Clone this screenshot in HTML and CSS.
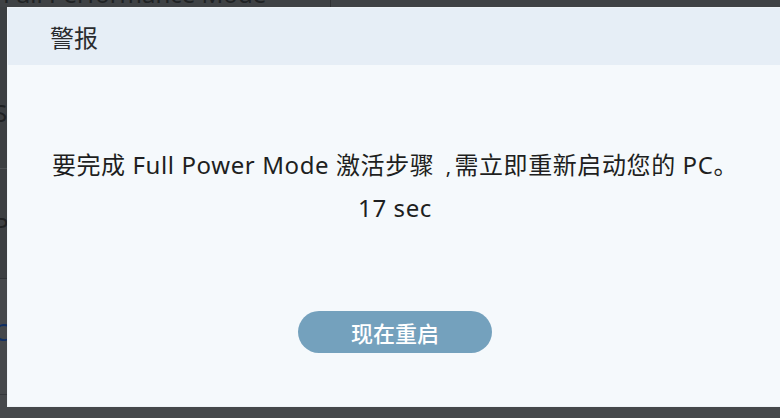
FILE: index.html
```html
<!DOCTYPE html>
<html lang="zh-CN">
<head>
<meta charset="utf-8">
<title>警报</title>
<link rel="stylesheet" href="styles.css">
</head>
<body>
<div class="app">
  <div class="app-top">
    <div class="app-title">Full Performance Mode</div>
    <div class="app-divider"></div>
  </div>
  <div class="app-list">
    <div class="app-row row-a"><span class="row-text">Settings</span></div>
    <div class="app-row row-b"><span class="row-text">Power</span></div>
    <div class="app-row row-c"><span class="row-text link">Cancel</span></div>
  </div>
</div>

<div class="dialog" role="alertdialog">
  <div class="dialog-header">警报</div>
  <div class="dialog-body">
    <p class="message">要完成 Full Power Mode 激活步骤<span class="comma">,</span>需立即重新启动您的 PC。<br>17 sec</p>
    <button class="restart-btn">现在重启</button>
  </div>
</div>
</body>
</html>
```
FILE: styles.css
```css
html, body {
  margin: 0;
  padding: 0;
}
body {
  width: 780px;
  height: 418px;
  overflow: hidden;
  position: relative;
  background: #45484b;
  font-family: "Noto Sans", "Noto Sans CJK SC", sans-serif;
}

/* dimmed application behind the dialog */
.app {
  display: flex;
  flex-direction: column;
  height: 418px;
}
.app-top {
  display: flex;
  height: 7px;
  overflow: hidden;
  background: #3f4245;
}
.app-title {
  width: 327px;
  padding-left: 3px;
  font-size: 24px;
  line-height: 24px;
  margin-top: -18px;
  color: #202224;
  white-space: nowrap;
}
.app-divider {
  width: 1px;
  background: #2f3133;
}
.app-list {
  display: flex;
  flex-direction: column;
  flex: 1;
}
.app-row {
  display: flex;
  align-items: center;
  border-bottom: 1px solid #4e5154;
}
.row-a { height: 161px; background: #3c3f42; }
.row-b { height: 109px; background: #3c3f42; border-bottom-color: #2f3236; }
.row-c { height: 115px; background: #45484b; border-bottom-color: #34373b; }
.row-text {
  font-size: 24px;
  color: #1f2123;
  margin-left: -6px;
}
.row-a .row-text { margin-top: 50px; }
.row-b .row-text { margin-top: 4px; }
.link { color: #102f63; margin-top: -10px; }

/* dialog overlay */
.dialog {
  position: absolute;
  left: 7px;
  top: 7px;
  width: 774px;
  height: 398px;
  border: 1px solid #eef3f7;
  background: #f5f9fc;
  display: flex;
  flex-direction: column;
}
.dialog-header {
  height: 57px;
  background: #e6eef6;
  display: flex;
  align-items: center;
  padding-left: 42px;
  font-size: 24px;
  color: #2a2c2f;
}
.dialog-body {
  flex: 1;
  display: flex;
  flex-direction: column;
  align-items: center;
}
.message {
  margin: 79px 0 0;
  font-size: 24px;
  line-height: 41px;
  letter-spacing: 0.6px;
  color: #1e1f21;
  text-align: center;
  white-space: nowrap;
}
.comma {
  display: inline-block;
  width: 20px;
  padding-left: 8px;
  box-sizing: border-box;
  text-align: center;
  font-size: 20px;
  letter-spacing: 0;
}
.restart-btn {
  margin-top: 83px;
  width: 194px;
  height: 42px;
  border: none;
  border-radius: 21px;
  background: #74a1bd;
  color: #ffffff;
  font-family: "Noto Sans CJK SC", sans-serif;
  font-size: 22px;
  font-weight: 500;
  padding: 0;
}
```
